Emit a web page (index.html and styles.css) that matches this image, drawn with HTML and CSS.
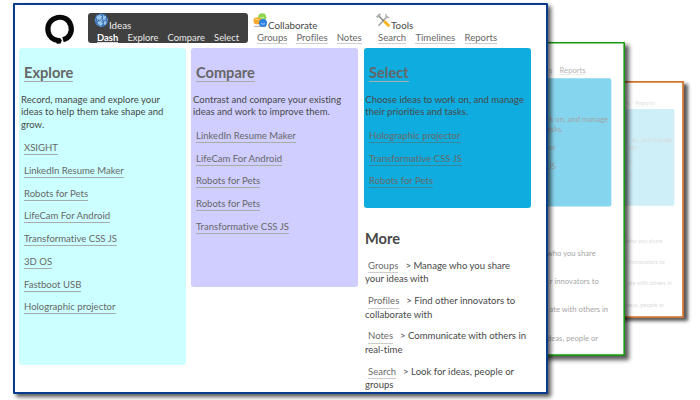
FILE: index.html
```html
<!DOCTYPE html>
<html lang="en">
<head>
<meta charset="utf-8">
<title>Ideas dashboard</title>
<link rel="stylesheet" href="styles.css">
</head>
<body>
<main class="stage">

  <section class="window third">
    <div class="content">
      <div class="links edge-links"><a>s</a><a>Reports</a></div>
      <div class="panel select edge">
        <p class="to-edge">on, and manage</p><p class="to-tasks">sks.</p>
        <p class="to-item">r</p><p class="to-item">S</p>
      </div>
      <div class="edge-more">
        <p class="to-share">who you share</p><p class="to-to">r innovators to</p>
        <p class="to-edge">ate with others in</p><p class="to-or">deas, people or</p>
      </div>
    </div>
  </section>

  <section class="window second">
    <div class="content">
      <div class="links edge-links"><a>s</a><a>Reports</a></div>
      <div class="panel select edge">
        <p class="to-edge">k on, and manage</p><p class="to-tasks">asks.</p>
        <p class="to-item">or</p><p class="to-item">JS</p>
      </div>
      <div class="edge-more">
        <p class="to-share">who you share</p><p class="to-to">r innovators to</p>
        <p class="to-edge">ate with others in</p><p class="to-or">deas, people or</p>
      </div>
    </div>
  </section>

  <section class="window first">
    <div class="content">
      <header class="top">
        <svg class="logo" viewBox="0 0 32 32"><path d="M19 26.800C25.500 25 28.500 19 26.900 12.800C25.200 6.500 19.500 3.300 13.500 4.500C6.500 6 2.700 12 4.100 18.600C5.100 23.600 9 27.200 14.600 27.600" fill="none" stroke="#080808" stroke-width="5.200"/><path d="M12 25.500l4.200-.5 1.500 2.200-1 3.300-4 .3z" fill="#080808"/></svg>
        <nav class="group ideas"><div class="title">
          <svg viewBox="0 0 15 15"><circle cx="7.300" cy="7.300" r="6.700" fill="#3d76b9"/><path d="M2 4l3-2 3 1-1 3-3 1zM9 2l3 2-1 3-2-1zM3 9l4-1 2 3-3 2zM10 8l3 1-2 3-1-1z" fill="#96c4eb"/><path d="M1 7h13M7 1v13M3 2.500l9 10M12 3l-9 9" stroke="#c4e0f6" stroke-width=".6" stroke-dasharray="1 1"/></svg><span>Ideas</span></div>
          <div class="links"><a class="current">Dash</a><a>Explore</a><a>Compare</a><a>Select</a></div></nav>
        <nav class="group collab"><div class="title">
          <svg viewBox="0 0 15 15"><path d="M1 13.400h12" stroke="#b9b9b9" stroke-width="1.300"/><circle cx="9.200" cy="4.300" r="4" fill="#8dd44c"/><rect x=".5" y="4.500" width="7.800" height="6.800" rx="3" fill="#fba92c"/><circle cx="10" cy="10" r="4" fill="#2f80e2"/><path d="M7.500 4q1.700 2 3.600 0" stroke="#d9f4b9" fill="none"/><path d="M8 10.500q2 1.500 4 0" stroke="#a9d2ff" fill="none"/><path d="M2 6.500h4" stroke="#ffd37e"/></svg><span>Collaborate</span></div>
          <div class="links"><a>Groups</a><a>Profiles</a><a>Notes</a></div></nav>
        <nav class="group tools"><div class="title">
          <svg viewBox="0 0 15 15"><path d="M2.500 12.800L11.500 3" stroke="#a2a6a6" stroke-width="1.700"/><path d="M10 1v3.500h3.500" stroke="#b7baba" stroke-width="1.500" fill="none"/><path d="M3 3l5 5.500" stroke="#777b7b" stroke-width="1.200"/><path d="M.8 4.500L4.300 1" stroke="#b0b3b3" stroke-width="2.400"/><path d="M8 8l5.300 5.300" stroke="#f6b31c" stroke-width="2.800"/></svg><span>Tools</span></div>
          <div class="links"><a>Search</a><a>Timelines</a><a>Reports</a></div></nav>
      </header>
      <div class="columns">
        <div class="panel explore"><h2><a>Explore</a></h2><p>Record, manage and explore your<br>ideas to help them take shape and<br>grow.</p>
          <ul><li><a>XSIGHT</a></li><li><a>LinkedIn Resume Maker</a></li><li><a>Robots for Pets</a></li><li><a>LifeCam For Android</a></li><li><a>Transformative CSS JS</a></li><li><a>3D OS</a></li><li><a>Fastboot USB</a></li><li><a>Holographic projector</a></li></ul></div>
        <div class="panel compare"><h2><a>Compare</a></h2><p>Contrast and compare your existing<br>ideas and work to improve them.</p>
          <ul><li><a>LinkedIn Resume Maker</a></li><li><a>LifeCam For Android</a></li><li><a>Robots for Pets</a></li><li><a>Robots for Pets</a></li><li><a>Transformative CSS JS</a></li></ul></div>
        <div class="right">
          <div class="panel select"><h2><a>Select</a></h2><p>Choose ideas to work on, and manage<br>their priorities and tasks.</p>
            <ul><li><a>Holographic projector</a></li><li><a>Transformative CSS JS</a></li><li><a>Robots for Pets</a></li></ul></div>
          <div class="more"><h2>More</h2>
            <p><a>Groups</a>&gt; Manage who you share<br>your ideas with</p>
            <p><a>Profiles</a>&gt; Find other innovators to<br>collaborate with</p>
            <p><a>Notes</a>&gt; Communicate with others in<br>real-time</p>
            <p><a>Search</a>&gt; Look for ideas, people or<br>groups</p></div>
        </div>
      </div>
    </div>
  </section>
</main>
</body>
</html>
```
FILE: styles.css
```css
* { box-sizing: border-box; }
body { margin: 0; background: #fff; }
.stage { position: relative; width: 700px; height: 400px; overflow: hidden; font: 9.55px/12.4px Lato, "Liberation Sans", sans-serif; font-variant-ligatures: none; color: #484848; }
h2, p, ul { margin: 0; padding: 0; }
ul { list-style: none; }

/* Overlapping windows, back to front */
.window { position: absolute; width: 535px; height: 391px; background: #fff; border: 2px solid #0a3c8c; transform-origin: 100% 0; border-radius: 1px; box-shadow: 3px 3px 4px rgba(0,0,0,.65); }
.first { left: 13px; top: 3px; }
.second { left: 90px; top: 42px; transform: scale(.803); border-color: #18990f; border-width: 2.500px; box-shadow: 4px 4px 5px rgba(0,0,0,.65); }
.third { left: 149px; top: 81px; transform: scale(.606); border-color: #d17430; border-width: 3.300px; box-shadow: 5px 5px 6px rgba(0,0,0,.65); }
.second .content { opacity: .5; }
.third .content { opacity: .2; }

.top { display: flex; height: 43px; padding-top: 8px; }
.logo { width: 32px; height: 32px; margin: 0 12px 0 29px; }
.group { height: 30px; }
.title { display: flex; height: 17px; font-size: 9.8px; }
.title svg { width: 15px; height: 15px; flex: none; }
.title span { padding: 6px 0 0; }
.links { display: flex; }
.links a { height: 13.500px; line-height: 15px; border-bottom: 1px solid #ccc; color: #686868; }
.ideas { width: 160px; padding-left: 6px; margin-right: 5px; background: #404040; border-radius: 3px; color: #eee; }
.ideas .links { gap: 9.200px; padding-left: 3px; font-size: 9.4px; }
.ideas .links a { height: 13px; color: #e8e8e8; border-color: transparent; }
.ideas .links .current { font-weight: 700; color: #fff; border-color: #ddd; }
.collab { width: 123px; }
.collab .links { gap: 9px; padding-left: 4px; }
.tools .links { gap: 9.300px; padding-left: 2px; }

.columns { display: flex; gap: 5.500px; padding-left: 4px; }
.panel { width: 167px; padding: 16px 2px 0; border-radius: 3px; }
.explore { height: 317px; background: #cff; }
.compare { height: 239px; margin-left: -.5px; margin-right: .5px; background: #cfceff; }
.select { height: 160px; background: #0facdf; }
.panel h2 { height: 30px; padding-left: 3px; font-size: 14.600px; line-height: 17px; color: #666; }
.panel h2 a { display: inline-block; border-bottom: 1px solid #aaa; }
.panel p { padding-bottom: 9px; margin-right: -2px; white-space: nowrap; }
.panel li { height: 22.750px; padding-left: 3px; }
.panel li a { display: inline-block; height: 15px; line-height: 15px; border-bottom: 1px solid #a5adad; color: #686868; }
.right .panel p { margin-left: -.7px; }
.select li a { border-color: #39879d; }
.more { padding: 22px 0 0 1px; }
.more h2 { height: 30px; font-size: 14.600px; line-height: 17px; }
.more p { height: 35.200px; white-space: nowrap; }
.more a { display: inline-block; margin: 0 7px 0 3px; border-bottom: 1px solid #ccc; color: #6c6c6c; }

/* Exposed right-hand parts of the rear windows */
.edge-links { justify-content: flex-end; gap: 9px; width: 484px; height: 43px; padding-top: 25px; }
.edge { margin-left: 349px; padding: 46px 0 0; text-align: right; }
.panel.edge p { height: 12.400px; padding: 0; margin: 0; }
.panel.edge .to-item { height: 22.750px; padding-top: 10px; }
.edge-more { margin-left: 349px; padding-top: 52px; text-align: right; }
.edge-more p { height: 35.200px; }
.to-edge { width: 163px; }
.to-tasks { width: 107px; }
.to-item { width: 98px; }
.to-share { width: 147.500px; }
.to-to { width: 151.500px; }
.to-or { width: 150.500px; }
```
